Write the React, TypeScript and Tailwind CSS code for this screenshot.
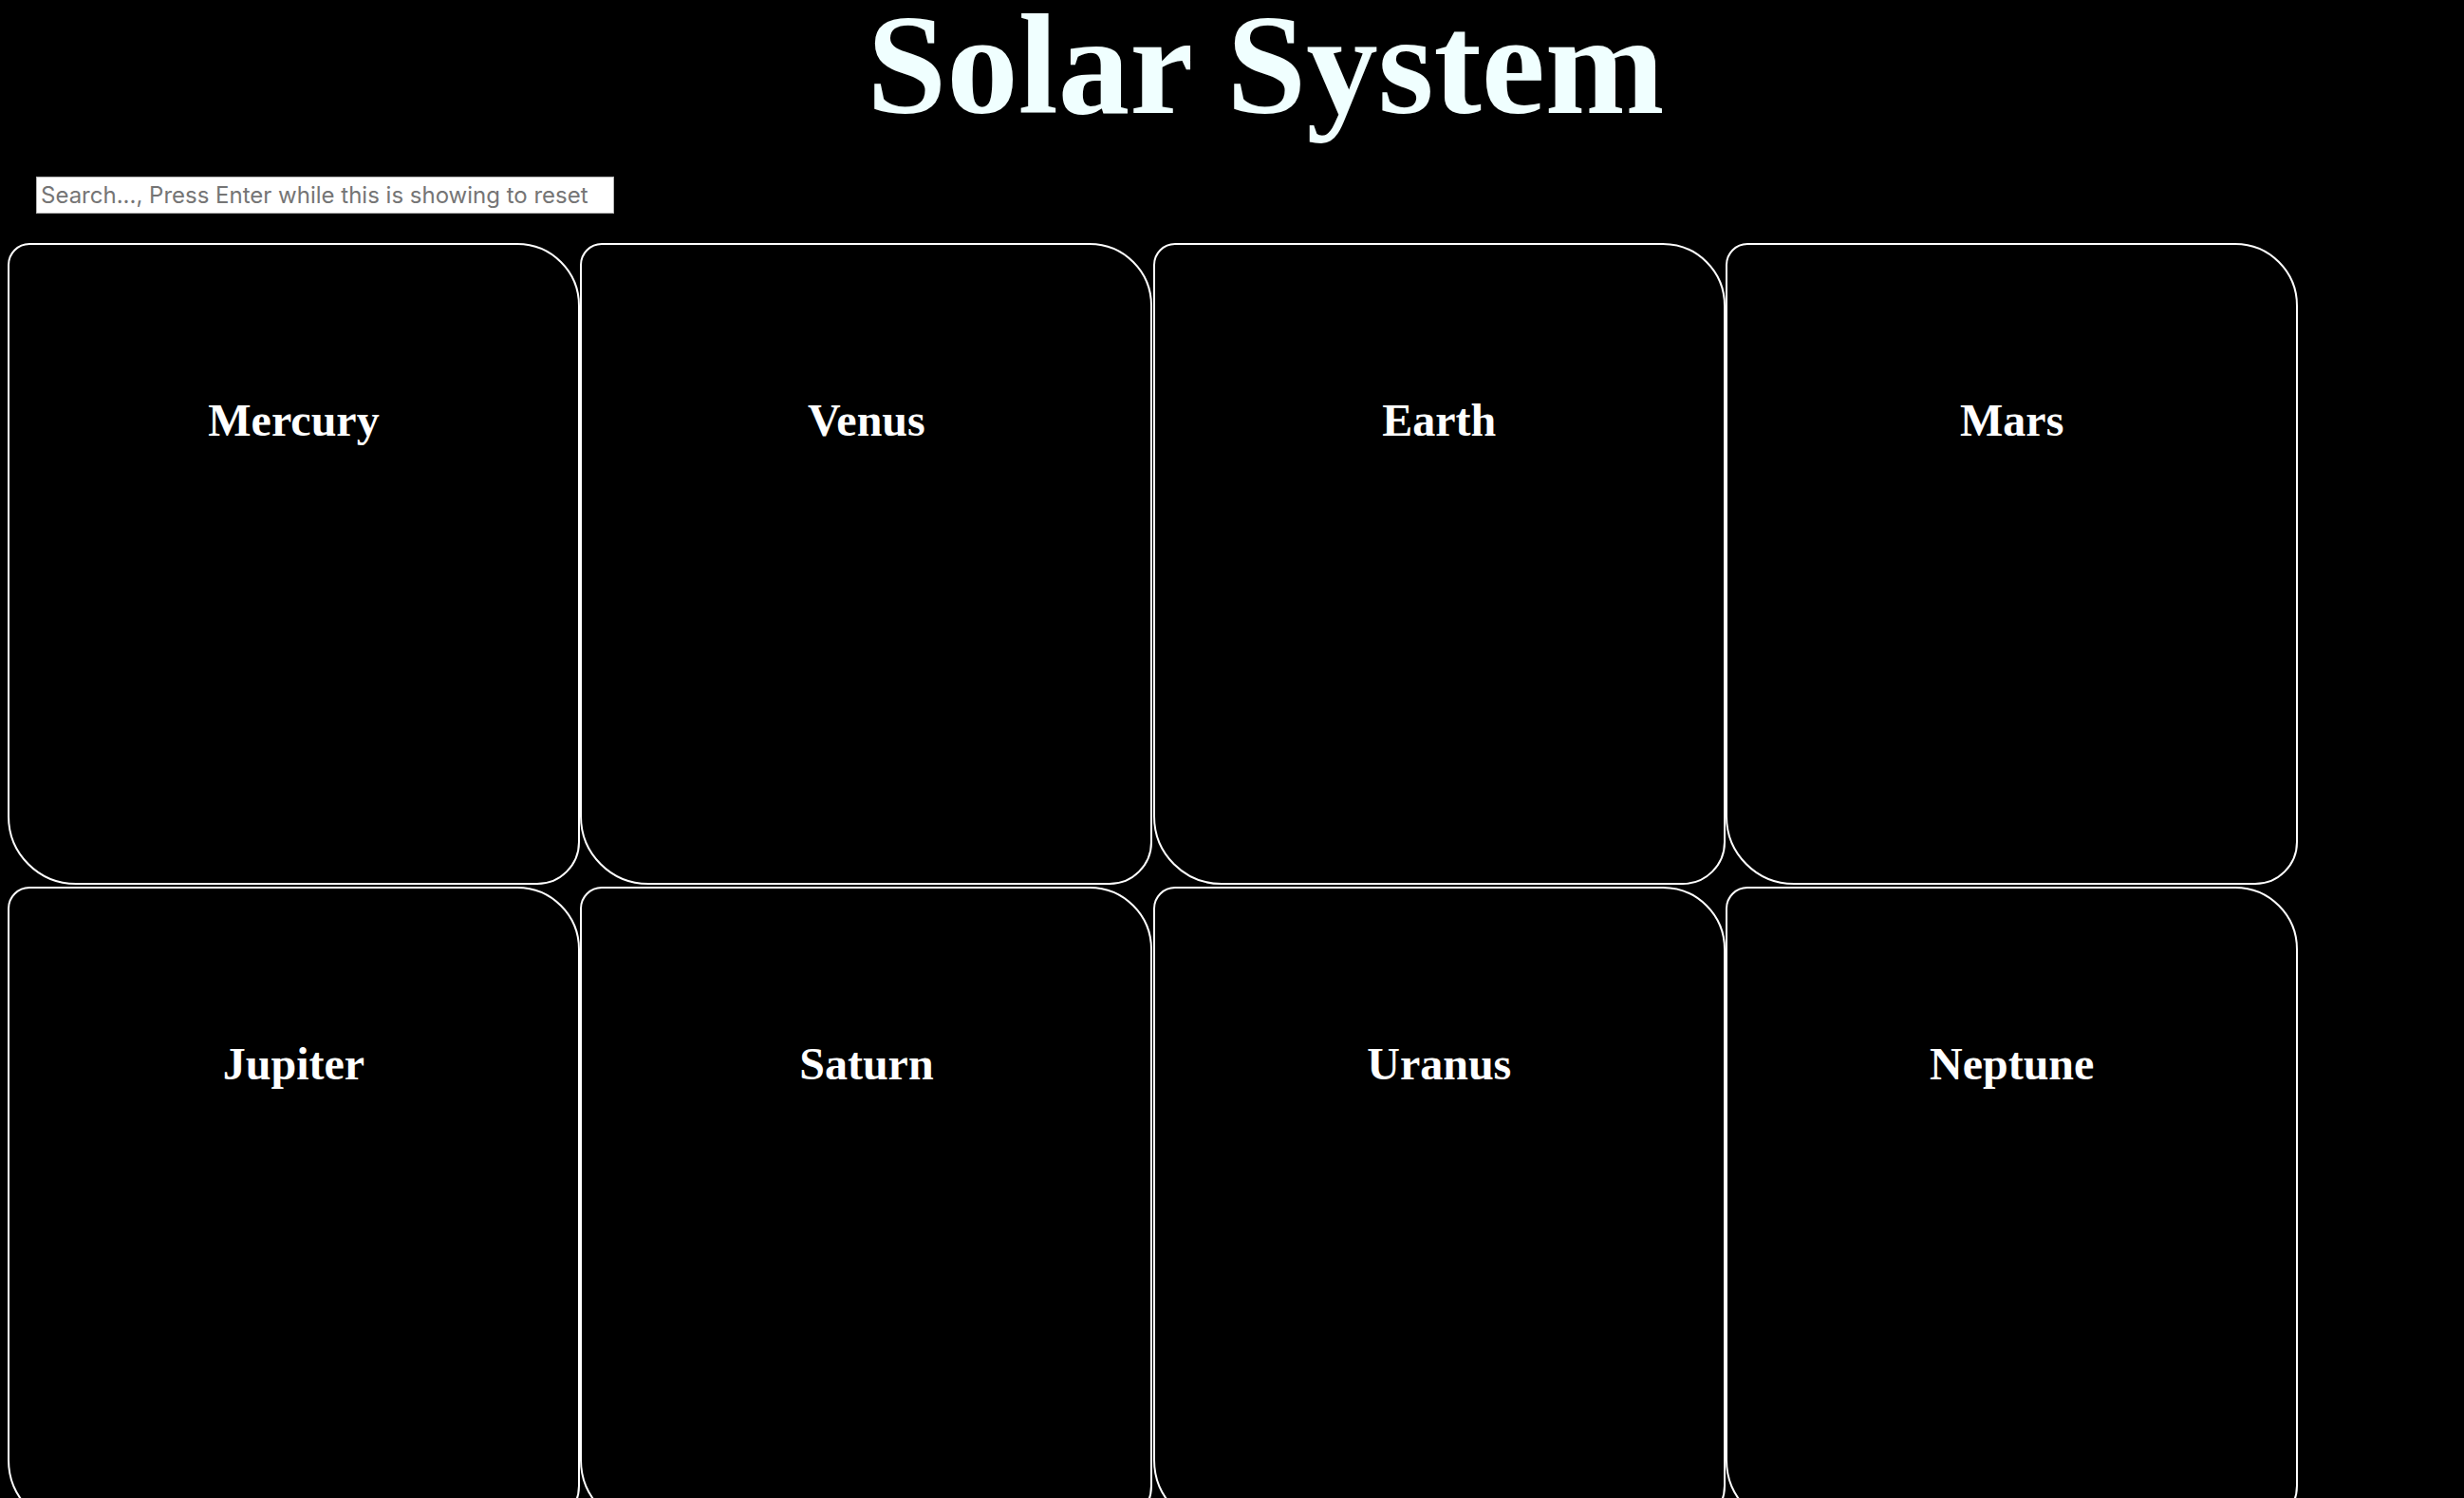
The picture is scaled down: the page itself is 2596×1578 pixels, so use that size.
import React from "react";

const planets = ["Mercury", "Venus", "Earth", "Mars", "Jupiter", "Saturn", "Uranus", "Neptune"];

export default function App() {
  return (
    <div className="min-h-screen w-full bg-black overflow-hidden" style={{ fontFamily: '"Liberation Serif", "Times New Roman", serif' }}>
      <h1 className="m-0 pl-[71px] text-center text-[151px] leading-[136px] font-bold text-[#f0ffff] font-['Liberation_Serif',serif]">
        Solar System
      </h1>
      <div className="pl-[38px] pt-[50px]">
        <input
          type="text"
          placeholder="Search..., Press Enter while this is showing to reset"
          className="block w-[609px] h-[39px] bg-white border border-[#b5b5b5] px-[4px] text-[24px] text-black placeholder:text-[#757575] outline-none font-['Inter',sans-serif]"
        />
      </div>
      <div className="pl-[8px] pt-[31px]">
        <div className="grid grid-cols-[repeat(4,603px)] gap-x-[0.4px] gap-y-[2px]">
          {planets.map((p) => (
            <div
              key={p}
              className="h-[676px] border-2 border-white bg-black rounded-[23px_66px_45px_72px] pt-[157px]"
            >
              <h2 className="m-0 text-center text-[48px] leading-[56px] font-bold text-white font-['Liberation_Serif',serif]">
                {p}
              </h2>
            </div>
          ))}
        </div>
      </div>
    </div>
  );
}
